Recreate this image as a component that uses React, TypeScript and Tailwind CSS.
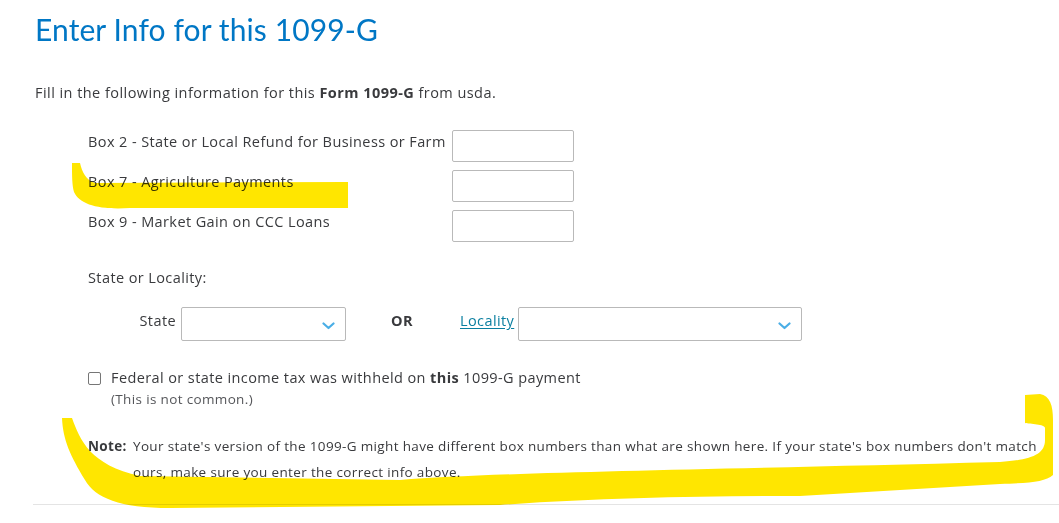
import React from 'react';

const Chevron = () => (
  <svg width="13" height="8" viewBox="0 0 13 8" className="shrink-0">
    <path d="M1.5 1.5 L6.5 6 L11.5 1.5" fill="none" stroke="#4aaee6" strokeWidth="2.2" strokeLinecap="round" strokeLinejoin="round" />
  </svg>
);

const SelectBox = ({ width }: { width: string }) => (
  <div className={`${width} h-[34px] border border-[#b9b9b9] rounded-[2px] bg-white flex items-center justify-end pr-[10px] pt-[4px]`}>
    <Chevron />
  </div>
);

const boxes = [
  'Box 2 - State or Local Refund for Business or Farm',
  'Box 7 - Agriculture Payments',
  'Box 9 - Market Gain on CCC Loans',
];

export default function App() {
  return (
    <div className="relative w-[1059px] h-[523px] overflow-hidden bg-white text-[#393a3d]" style={{ fontFamily: '"Open Sans", "Noto Sans", sans-serif' }}>
      <div className="pl-[33px]">
        <div className="pl-[2px]">
          <h1 className="pt-[9px] text-[30px] leading-[40px] text-[#0077c5] font-normal tracking-[0.1px]" style={{ fontFamily: 'Lato, sans-serif' }}>
            Enter Info for this 1099-G
          </h1>
          <p className="mt-[34px] text-[14.5px] leading-[20px] tracking-[0.45px]">
            Fill in the following information for this <b className="font-bold">Form 1099-G</b> from usda.
          </p>

          <div className="mt-[27px] pl-[53px] flex flex-col gap-[8px]">
            {boxes.map((label) => (
              <div key={label} className="flex items-start">
                <div className="w-[364px] pt-[2px] text-[14.5px] leading-[20px] tracking-[0.4px] whitespace-nowrap">{label}</div>
                <div className="w-[122px] h-[32px] border border-[#b9b9b9] rounded-[2px]" />
              </div>
            ))}
          </div>

          <div className="mt-[26px] pl-[53px] text-[14.5px] leading-[20px] tracking-[0.4px]">State or Locality:</div>

          <div className="mt-[19px] pl-[53px] flex items-center text-[14.5px] tracking-[0.4px]">
            <span className="w-[88px] text-right pb-[6px]">State</span>
            <div className="ml-[5px]">
              <SelectBox width="w-[165px]" />
            </div>
            <span className="ml-[45px] w-[24px] font-bold pb-[6px]">OR</span>
            <a href="#" className="ml-[45px] text-[#0a7fa0] underline underline-offset-2 pb-[6px]">Locality</a>
            <div className="ml-[4px]">
              <SelectBox width="w-[284px]" />
            </div>
          </div>

          <div className="mt-[27px] pl-[53px] flex items-start">
            <div className="mt-[4px] w-[13px] h-[13px] border border-[#767676] rounded-[2px] bg-white" />
            <div className="ml-[10px]">
              <div className="text-[14.5px] leading-[20px] tracking-[0.4px]">
                Federal or state income tax was withheld on <b className="font-bold">this</b> 1099-G payment
              </div>
              <div className="mt-[1px] text-[13.5px] leading-[20px] tracking-[0.35px] text-[#55565a]">(This is not common.)</div>
            </div>
          </div>

          <div className="mt-[24px] pl-[53px] flex text-[13.5px] leading-[26px] tracking-[0.35px] whitespace-nowrap">
            <b className="font-bold w-[45px] shrink-0">Note:</b>
            <span>
              Your state's version of the 1099-G might have different box numbers than what are shown here. If your state's box numbers don't match
              <br />
              ours, make sure you enter the correct info above.
            </span>
          </div>
        </div>
        <div className="mt-[19px] border-t border-[#e4e4e4]" />
      </div>

      <svg className="absolute inset-0 pointer-events-none mix-blend-multiply" width="1059" height="523" viewBox="0 0 1059 523">
        <path
          fill="#ffe600"
          d="M72 163 L80 163 C82 172 86 180 95 183 L348 182 L348 208 L130 208 C100 210 80 205 74 192 C72 185 72 175 72 163 Z"
        />
        <path
          fill="#ffe600"
          d="M62 418 L72 418 C80 440 90 465 140 476 L400 480 C500 472 700 470 1000 462 C1030 460 1045 455 1045 440 L1045 428 C1045 424 1030 424 1025 423 L1025 395 L1040 394 C1050 396 1053 405 1053 420 L1053 475 C1045 482 1030 483 1000 484 L800 496 C700 496 600 498 500 505 L170 508 C120 508 95 498 85 480 C70 455 63 440 62 418 Z"
        />
      </svg>
    </div>
  );
}
